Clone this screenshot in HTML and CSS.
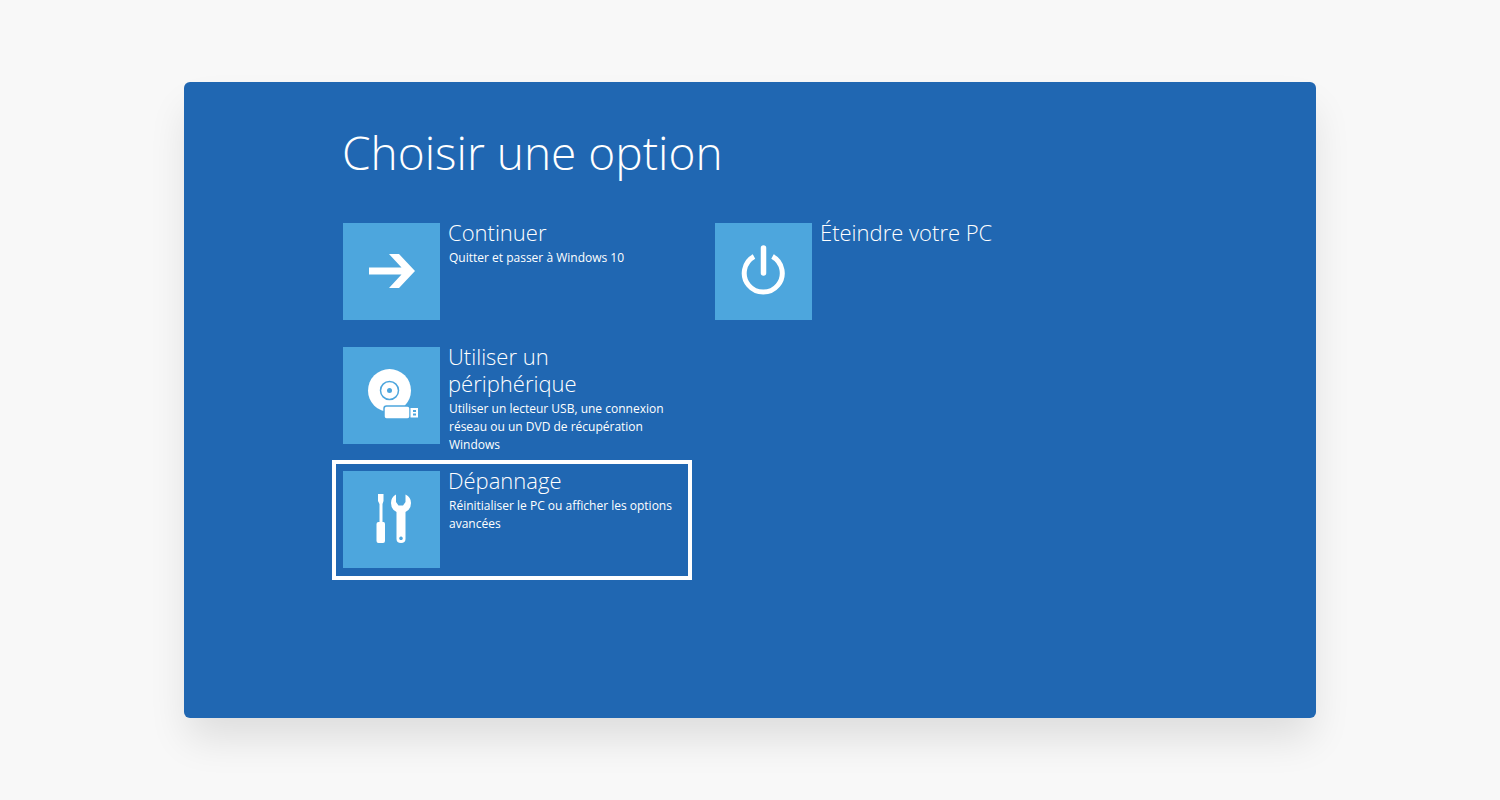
FILE: index.html
```html
<!DOCTYPE html>
<html lang="fr">
<head>
<meta charset="utf-8">
<title>Choisir une option</title>
<link rel="stylesheet" href="styles.css">
</head>
<body>
<main class="screen">
  <h1 class="heading">Choisir une option</h1>
  <div class="options">
    <div class="column">
      <button class="option" type="button">
        <svg class="tile" viewBox="0 0 97 97" aria-hidden="true">
          <path fill="#fff" d="M26 44.500H58.500L46 31H56L72 48L56 65H46L58.500 51.500H26Z"/>
        </svg>
        <span class="text">
          <span class="name">Continuer</span>
          <span class="detail">Quitter et passer à Windows 10</span>
        </span>
      </button>
      <button class="option" type="button">
        <svg class="tile" viewBox="0 0 97 97" aria-hidden="true">
          <circle cx="46.500" cy="43.500" r="21.500" fill="#fff"/>
          <circle cx="46.500" cy="43.500" r="9" fill="none" stroke="#4da6dd" stroke-width="1.500"/>
          <circle cx="46.500" cy="43.500" r="2.500" fill="#4da6dd"/>
          <rect x="41" y="59" width="26" height="13" rx="2.500" fill="#fff" stroke="#4da6dd" stroke-width="1.500"/>
          <path fill="#fff" fill-rule="evenodd" d="M67.500 61H75V70.500H67.500ZM70 63V65H73V63ZM70 66.500V68.500H73V66.500Z"/>
        </svg>
        <span class="text">
          <span class="name">Utiliser un périphérique</span>
          <span class="detail">Utiliser un lecteur USB, une connexion réseau ou un DVD de récupération Windows</span>
        </span>
      </button>
      <button class="option option-selected" type="button">
        <svg class="tile" viewBox="0 0 97 97" aria-hidden="true">
          <path fill="#fff" d="M35 23H40.500V30L39.500 33V51H40.500Q42 51 42 53V70Q42 72 40 72H35.500Q33.500 72 33.500 70V53Q33.500 51 35.500 51H36.500V33L35 30Z"/>
          <path fill="#fff" fill-rule="evenodd" d="M53 23.500V31L55.500 34.500H60L62.500 31V23.500Q68 26 68 32Q68 38.500 62.500 41V68Q62.500 72 58 72Q53.500 72 53.500 68V41Q48 38.500 48 32Q48 26 53 23.500ZM58 65.500A1.800 1.800 0 1 0 58.010 65.500Z"/>
        </svg>
        <span class="text">
          <span class="name">Dépannage</span>
          <span class="detail">Réinitialiser le PC ou afficher les options avancées</span>
        </span>
      </button>
    </div>
    <div class="column">
      <button class="option" type="button">
        <svg class="tile" viewBox="0 0 97 97" aria-hidden="true">
          <path fill="none" stroke="#fff" stroke-width="5" d="M39 33.500A19 19 0 1 0 57.500 33.500"/>
          <path fill="none" stroke="#fff" stroke-width="5.500" stroke-linecap="round" d="M48.500 25V50"/>
        </svg>
        <span class="text">
          <span class="name">Éteindre votre PC</span>
        </span>
      </button>
    </div>
  </div>
</main>
</body>
</html>
```
FILE: styles.css
```css
* {
  box-sizing: border-box;
}

body {
  margin: 0;
  min-height: 100vh;
  padding: 82px 184px;
  display: flex;
  background: #f8f8f8;
  font-family: "Open Sans", "Noto Sans", sans-serif;
}

.screen {
  flex: 1;
  padding: 38px 148px;
  border-radius: 6px;
  background: #2067b2;
  color: #fff;
  box-shadow: 0 24px 40px -4px rgba(0, 0, 0, 0.11);
}

.heading {
  margin: 0 0 28px;
  padding-left: 10px;
  font-size: 46px;
  line-height: 64px;
  font-weight: 300;
}

.options {
  display: grid;
  grid-template-columns: repeat(2, minmax(0, 360px));
  gap: 12px;
}

.column {
  display: flex;
  flex-direction: column;
  gap: 4px;
}

.option {
  display: flex;
  align-items: flex-start;
  gap: 8px;
  min-height: 120px;
  margin: 0;
  padding: 7px 11px 0;
  border: 0;
  background: none;
  color: inherit;
  font: inherit;
  text-align: left;
  cursor: pointer;
}

.option-selected {
  outline: 4px solid #fff;
  outline-offset: -4px;
}

.tile {
  flex: none;
  width: 97px;
  height: 97px;
  margin-top: 4px;
  background: #4da6dd;
}

.text {
  flex: 1;
  min-width: 0;
}

.name {
  display: block;
  font-size: 22px;
  line-height: 27px;
  font-weight: 300;
}

.detail {
  display: block;
  margin-top: 3px;
  padding-left: 1px;
  font-size: 12px;
  line-height: 18px;
}
```
